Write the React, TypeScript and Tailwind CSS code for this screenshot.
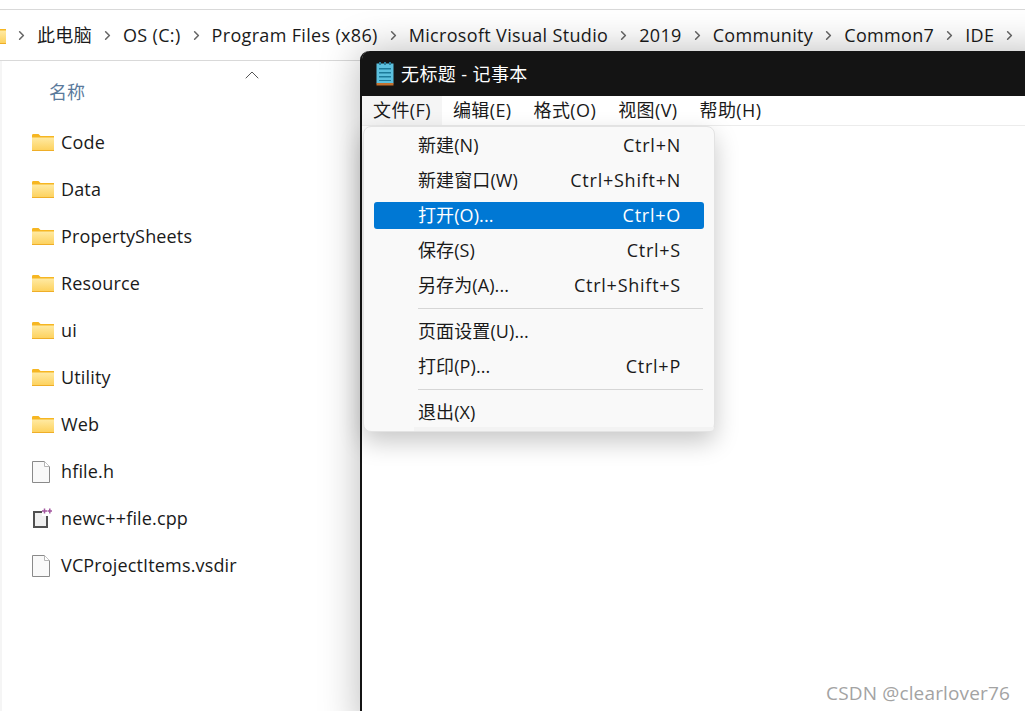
import { ChevronRight, ChevronUp } from "lucide-react";

const font = { fontFamily: '"Open Sans", "Noto Sans CJK SC", sans-serif' };

const crumbs = ["此电脑", "OS (C:)", "Program Files (x86)", "Microsoft Visual Studio", "2019", "Community", "Common7", "IDE"];

const files = [
  { name: "Code", kind: "folder" },
  { name: "Data", kind: "folder" },
  { name: "PropertySheets", kind: "folder" },
  { name: "Resource", kind: "folder" },
  { name: "ui", kind: "folder" },
  { name: "Utility", kind: "folder" },
  { name: "Web", kind: "folder" },
  { name: "hfile.h", kind: "file" },
  { name: "newc++file.cpp", kind: "cpp" },
  { name: "VCProjectItems.vsdir", kind: "file" },
];

const menus = ["文件(F)", "编辑(E)", "格式(O)", "视图(V)", "帮助(H)"];

function FolderIcon() {
  return (
    <svg width="22" height="17" viewBox="0 0 22 17">
      <defs>
        <linearGradient id="folderBody" x1="0" y1="0" x2="0" y2="1">
          <stop offset="0" stopColor="#ffeaa3" />
          <stop offset="1" stopColor="#fdd25f" />
        </linearGradient>
      </defs>
      <path d="M0 1.500C0 .7.5 0 1.200 0h5.300l2 2H22v15H0z" fill="#f6b622" />
      <path d="M0 3.500h22V16H0z" fill="url(#folderBody)" />
      <path d="M0 16h22v1H0z" fill="#efae28" />
    </svg>
  );
}

function FileIcon() {
  return (
    <svg width="18" height="22" viewBox="0 0 18 22">
      <path d="M.5.5h12l5 5v16H.5z" fill="#f9f9f9" stroke="#8a8a8a" />
      <path d="M12.500.5v5h5" fill="#fff" stroke="#b5b5b5" />
    </svg>
  );
}

function CppIcon() {
  return (
    <svg width="20" height="22" viewBox="0 0 20 22">
      <path d="M1 3h9v2H3v13h11V8h2v12H1z" fill="#505050" />
      <path d="M3 5h7v3h4v10H3z" fill="#f0f0f0" />
      <path d="M10 3h5M12.500.5v5M15.500 3h4.500M17.800.5v5" stroke="#a2579f" strokeWidth="1.500" fill="none" />
    </svg>
  );
}

function NotepadIcon() {
  return (
    <svg width="20" height="24" viewBox="0 0 20 24">
      <path d="M1.500 1.500h17v20h-17z" fill="#5cc0de" />
      <path d="M1.500 21h17v2.500h-17z" fill="#c4702e" />
      <path d="M4 0h2v3H4zM9 0h2v3H9zM14 0h2v3h-2z" fill="#2a7f9c" />
      <path d="M4 6h12v1.500H4zM4 10h12v1.500H4zM4 14h12v1.500H4zM4 18h12v1H4z" fill="#1c7a9a" />
    </svg>
  );
}

function MenuRow({ label, keys, active }: { label: string; keys?: string; active?: boolean }) {
  return (
    <div
      className={`mx-[10px] flex h-[27px] items-center justify-between rounded-[3px] pl-[44px] pr-[23px] text-[18px] ${
        active ? "bg-[#0078d4] text-white" : "text-[#1a1a1a]"
      }`}
    >
      <span className="tracking-[0.1px]">{label}</span>
      {keys && <span className="tracking-[0.75px]">{keys}</span>}
    </div>
  );
}

export default function App() {
  return (
    <div className="relative h-[711px] w-[1025px] overflow-hidden bg-white" style={font}>
      <div className="mt-[9px] flex h-[52px] items-center gap-[8px] overflow-hidden border-y border-[#d9d9d9] text-[18px] tracking-[0.33px] text-[#1a1a1a]">
        <div className="ml-[-16px] shrink-0">
          <FolderIcon />
        </div>
        {crumbs.map((c) => (
          <div key={c} className="flex shrink-0 items-center gap-[8px]">
            <ChevronRight size={15} strokeWidth={2.500} className="text-[#666666]" />
            <span className="whitespace-nowrap">{c}</span>
          </div>
        ))}
        <ChevronRight size={15} strokeWidth={2.500} className="shrink-0 text-[#666666]" />
      </div>

      <div className="flex h-[650px] flex-col border-l-2 border-[#f5f5f5] pl-[30px]">
        <div className="relative flex h-[58px] shrink-0 items-center pl-[17px] pt-[4px] text-[18px] text-[#5a7a9c]">
          <span>名称</span>
          <ChevronUp size={24} strokeWidth={1} className="absolute left-[208px] top-[2px] text-[#555555]" />
        </div>
        {files.map((f) => (
          <div key={f.name} className="flex h-[47px] shrink-0 items-center text-[18px] tracking-[0.15px] text-[#1a1a1a]">
            <div className="flex w-[29px] shrink-0 items-center">
              {f.kind === "folder" && <FolderIcon />}
              {f.kind === "file" && <FileIcon />}
              {f.kind === "cpp" && <CppIcon />}
            </div>
            <span>{f.name}</span>
          </div>
        ))}
      </div>

      <div className="absolute left-[360px] top-[51px] h-[680px] w-[700px] rounded-tl-[9px] border-l-2 border-[#141414] bg-white shadow-[0_0_40px_rgba(0,0,0,0.28)]">
        <div className="flex h-[45px] items-center gap-[6px] rounded-tl-[8px] bg-[#141414] pl-[13px] pt-px text-[18px] tracking-[0.4px] text-white">
          <NotepadIcon />
          <span>无标题 - 记事本</span>
        </div>
        <div className="flex h-[30px] border-b border-[#ececec] text-[18px] tracking-[0.4px] text-[#1a1a1a]">
          {menus.map((m, i) => (
            <div key={m} className={`flex items-center pl-[11px] pr-[11px] ${i === 0 ? "bg-[#f5f5f5]" : ""}`}>
              {m}
            </div>
          ))}
        </div>

        <div className="absolute left-px top-[75px] w-[352px] rounded-[8px] border border-[#e3e3e3] bg-[#f9f9f9] pt-[5px] shadow-[0_10px_24px_rgba(0,0,0,0.22)]">
          <div className="flex flex-col gap-[8px]">
            <MenuRow label="新建(N)" keys="Ctrl+N" />
            <MenuRow label="新建窗口(W)" keys="Ctrl+Shift+N" />
            <MenuRow label="打开(O)..." keys="Ctrl+O" active />
            <MenuRow label="保存(S)" keys="Ctrl+S" />
            <MenuRow label="另存为(A)..." keys="Ctrl+Shift+S" />
          </div>
          <div className="mx-[54px] my-[9px] mr-[11px] h-px bg-[#d6d6d6]" />
          <div className="flex flex-col gap-[8px]">
            <MenuRow label="页面设置(U)..." />
            <MenuRow label="打印(P)..." keys="Ctrl+P" />
          </div>
          <div className="mx-[54px] my-[9px] mr-[11px] h-px bg-[#d6d6d6]" />
          <MenuRow label="退出(X)" />
          <div className="ml-[50px] mt-px h-[4px] rounded-br-[8px] bg-[#f3f3f3]" />
        </div>
      </div>

      <div className="absolute bottom-[4px] right-[15px] text-[19px] tracking-[0.15px] text-[#a3a3a3]">CSDN @clearlover76</div>
    </div>
  );
}
